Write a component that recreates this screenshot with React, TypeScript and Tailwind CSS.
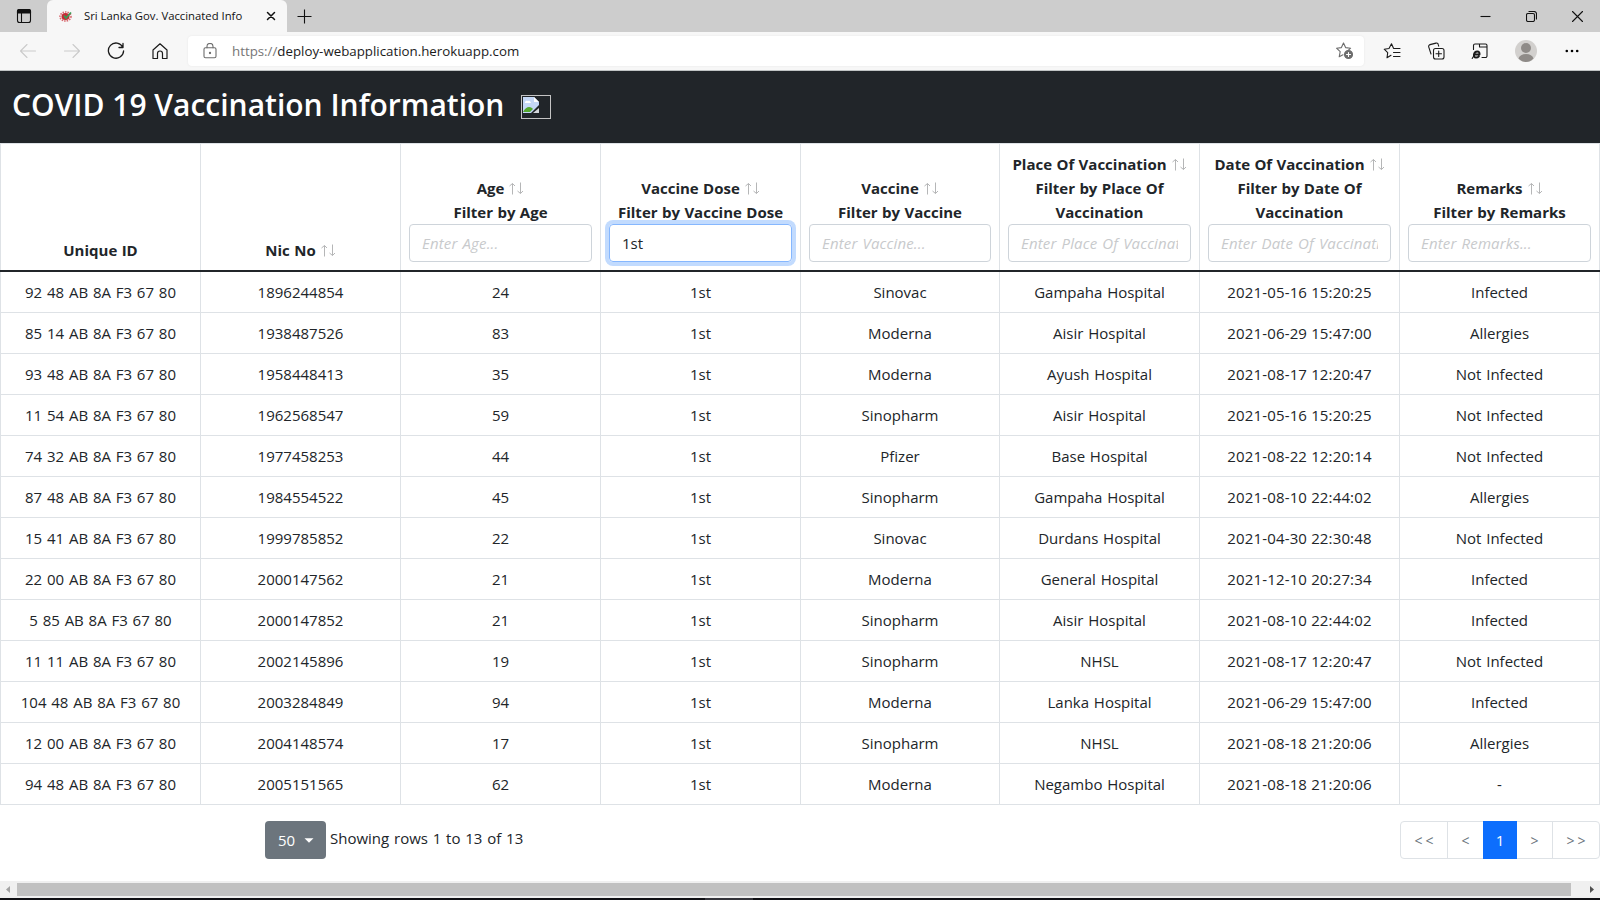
import React from "react";

const rows = `92 48 AB 8A F3 67 80|1896244854|24|1st|Sinovac|Gampaha Hospital|2021-05-16 15:20:25|Infected
85 14 AB 8A F3 67 80|1938487526|83|1st|Moderna|Aisir Hospital|2021-06-29 15:47:00|Allergies
93 48 AB 8A F3 67 80|1958448413|35|1st|Moderna|Ayush Hospital|2021-08-17 12:20:47|Not Infected
11 54 AB 8A F3 67 80|1962568547|59|1st|Sinopharm|Aisir Hospital|2021-05-16 15:20:25|Not Infected
74 32 AB 8A F3 67 80|1977458253|44|1st|Pfizer|Base Hospital|2021-08-22 12:20:14|Not Infected
87 48 AB 8A F3 67 80|1984554522|45|1st|Sinopharm|Gampaha Hospital|2021-08-10 22:44:02|Allergies
15 41 AB 8A F3 67 80|1999785852|22|1st|Sinovac|Durdans Hospital|2021-04-30 22:30:48|Not Infected
22 00 AB 8A F3 67 80|2000147562|21|1st|Moderna|General Hospital|2021-12-10 20:27:34|Infected
5 85 AB 8A F3 67 80|2000147852|21|1st|Sinopharm|Aisir Hospital|2021-08-10 22:44:02|Infected
11 11 AB 8A F3 67 80|2002145896|19|1st|Sinopharm|NHSL|2021-08-17 12:20:47|Not Infected
104 48 AB 8A F3 67 80|2003284849|94|1st|Moderna|Lanka Hospital|2021-06-29 15:47:00|Infected
12 00 AB 8A F3 67 80|2004148574|17|1st|Sinopharm|NHSL|2021-08-18 21:20:06|Allergies
94 48 AB 8A F3 67 80|2005151565|62|1st|Moderna|Negambo Hospital|2021-08-18 21:20:06|-`
  .split("\n")
  .map((line) => line.split("|"));

type Column = { title: string; sortable?: boolean; filter?: string[]; value?: string };

const columns: Column[] = [
  { title: "Unique ID" },
  { title: "Nic No", sortable: true },
  { title: "Age", sortable: true, filter: ["Filter by Age"] },
  { title: "Vaccine Dose", sortable: true, filter: ["Filter by Vaccine Dose"], value: "1st" },
  { title: "Vaccine", sortable: true, filter: ["Filter by Vaccine"] },
  { title: "Place Of Vaccination", sortable: true, filter: ["Filter by Place Of", "Vaccination"] },
  { title: "Date Of Vaccination", sortable: true, filter: ["Filter by Date Of", "Vaccination"] },
  { title: "Remarks", sortable: true, filter: ["Filter by Remarks"] },
];

const gridColumns = "grid-cols-[repeat(4,200px)_199px_200px_200px_201px]";

function Icon({ size = 18, className = "", children }: { size?: number; className?: string; children: React.ReactNode }) {
  return (
    <svg width={size} height={size} viewBox={`0 0 ${size} ${size}`} fill="none" stroke="currentColor" strokeWidth="1.1" strokeLinecap="round" strokeLinejoin="round" className={`shrink-0 ${className}`}>
      {children}
    </svg>
  );
}

function SortArrows() {
  return (
    <svg width="16" height="13" viewBox="0 0 16 13" fill="none" stroke="#b5b6b7" strokeWidth="1" className="ml-1 shrink-0">
      <path d="M4.500 12.500V1.500M1.500 4L4.500 1.500L7 4M12.500 .5V11.500M9.500 9L12.500 11.500L15 9" />
    </svg>
  );
}

function TabStrip() {
  return (
    <div className="flex h-8 shrink-0 bg-[#cdcdcd] text-[#111]">
      <div className="flex w-[47px] items-center pl-4">
        <Icon size={16}>
          <rect x="1.5" y="1.5" width="13" height="13" rx="2" />
          <path d="M1.5 4V3a1.5 1.5 0 0 1 1.5-1.500h10A1.500 1.500 0 0 1 14.500 3v2h-13z" fill="currentColor" />
          <path d="M5.500 5v9" />
        </Icon>
      </div>
      <div className="flex w-60 items-center rounded-t-md bg-[#f7f7f7] pl-3">
        <svg width="14" height="12" viewBox="0 0 14 12" className="shrink-0">
          <ellipse cx="6.500" cy="6.500" rx="5.500" ry="4.500" fill="none" stroke="#d86a70" strokeWidth="1.600" strokeDasharray="1.500 1" />
          <ellipse cx="6.500" cy="6.500" rx="4" ry="3.500" fill="#c62b35" />
          <path d="M5 5.500l2 2.500L12 2.500" fill="none" stroke="#3c9a55" strokeWidth="1.800" />
        </svg>
        <span className="ml-[11px] w-[182px] text-[11.300px] whitespace-nowrap">Sri Lanka Gov. Vaccinated Info</span>
        <Icon size={10}>
          <path d="M1.500 1.500l7 7M8.500 1.500l-7 7" strokeWidth="1.500" />
        </Icon>
      </div>
      <div className="flex flex-1 items-center pl-[10px]">
        <Icon size={15}>
          <path d="M7.500 .5v14M.5 7.500h14" strokeLinecap="butt" />
        </Icon>
      </div>
      <div className="flex w-[120px] items-center gap-[35px]">
        <Icon size={11}><path d="M.5 5.500h10" strokeLinecap="butt" /></Icon>
        <Icon size={11}>
          <rect x=".5" y="2.500" width="8" height="8" rx="1.500" />
          <path d="M3 .5h5a2.500 2.500 0 0 1 2.500 2.500v5" />
        </Icon>
        <Icon size={11}><path d="M.5 .5l10 10M10.500 .5l-10 10" /></Icon>
      </div>
    </div>
  );
}

function Toolbar() {
  return (
    <div className="flex h-[39px] shrink-0 items-center border-b border-[#c0c4c4] bg-[#f7f7f7] text-[#1b1b1b]">
      <div className="flex w-[188px] items-center gap-[26px] pl-[19px]">
        <Icon className="text-[#cbcbcb]"><path d="M16.500 9H1.500M8 2.500L1.500 9L8 15.500" /></Icon>
        <Icon className="text-[#cbcbcb]"><path d="M1.500 9h15M10 2.500L16.500 9L10 15.500" /></Icon>
        <Icon><path d="M15.800 5.200A7.600 7.600 0 1 0 16.600 9M16 1.500V5.500H12" strokeWidth="1.300" /></Icon>
        <Icon><path d="M2 8L9 1.800L16 8V16.500H11.500V11.500a2.500 2.500 0 0 0-5 0V16.500H2Z" strokeWidth="1.200" /></Icon>
      </div>
      <div className="flex h-[30px] w-[1176px] items-center rounded bg-white pr-[9px] pl-[14px] shadow-[0_0_2px_#e4e4e4]">
        <Icon size={16} className="text-[#6d6d6d]">
          <rect x="2" y="4.800" width="12" height="10" rx="1.500" />
          <path d="M5 4.800V3.200a3 2.800 0 0 1 6 0v1.600" />
          <circle cx="8" cy="10" r=".6" fill="currentColor" />
        </Icon>
        <span className="ml-[14px] flex-1 text-[13.300px]"><span className="text-[#767676]">https://</span>deploy-webapplication.herokuapp.com</span>
        <Icon size={20} className="text-[#6d6d6d]">
          <path d="M8.500 2l2.100 4.600 5 .6-3.700 3.400M8.500 2L6.400 6.600L1.500 7.200L5.200 10.600L4.200 15.800L8 13.800" />
          <circle cx="13.500" cy="13.500" r="4" fill="currentColor" />
          <path d="M11.500 13.500h4M13.500 11.500v4" stroke="white" />
        </Icon>
      </div>
      <div className="flex flex-1 items-center pl-[19px]">
        <Icon><path d="M10.800 6.500H17M10.500 6.300L8.500 1.800L6 6.500L1.200 7.200L4.700 10.700L4 15.800L8 13.300M10.500 10.500h6.500M10.500 14.500h6.500" /></Icon>
        <Icon className="ml-[26px]">
          <rect x="6.500" y="6.500" width="10.500" height="10.500" rx="2" />
          <path d="M11.700 9v5.500M9 11.700h5.500M4 12L1.700 4.800a1.800 1.800 0 0 1 1.300-2.200l6-1.500a1.800 1.800 0 0 1 2.200 1.300l.5 1.800" />
        </Icon>
        <Icon className="ml-[26px]">
          <path d="M2.500 7.500V3.500a1.500 1.500 0 0 1 1.500-1.500h10.500A1.500 1.500 0 0 1 16 3.500v10.500a1.500 1.500 0 0 1-1.500 1.500H11M8.500 2V5H16" />
          <path d="M3 12.500h5.500q.3-3-2.200-3Q3.500 9.500 3 12.500q-.4 3 2 3q1.800 0 2.800-1.200" strokeWidth="2" />
          <path d="M1.200 16.500L3 13.500" />
        </Icon>
        <svg width="22" height="22" viewBox="0 0 22 22" className="ml-[26px] shrink-0">
          <circle cx="11" cy="11" r="11" fill="#d2d0ce" />
          <circle cx="11" cy="8" r="5" fill="#8f8b88" />
          <path d="M3.500 18.500Q5 14 11 14T18.500 18.500Q15 22 11 22T3.500 18.500" fill="#8f8b88" />
        </svg>
        <svg width="14" height="4" viewBox="0 0 14 4" className="ml-7 shrink-0">
          <circle cx="1.800" cy="2" r="1.300" /><circle cx="7" cy="2" r="1.300" /><circle cx="12.200" cy="2" r="1.300" />
        </svg>
      </div>
    </div>
  );
}

function HeaderCell({ column }: { column: Column }) {
  return (
    <div className="flex h-[126px] min-w-0 flex-col justify-end border-l border-[#dee2e6] px-2 pb-2 text-center font-bold [word-spacing:0.5px] last:border-r">
      <div className="flex h-6 items-center justify-center whitespace-nowrap">
        {column.title}
        {column.sortable && <SortArrows />}
      </div>
      {column.filter?.map((line) => <div key={line} className="h-6 whitespace-nowrap">{line}</div>)}
      {column.filter && (
        <input
          className={`h-[38px] w-full rounded border px-3 text-[15px] font-normal outline-none placeholder:tracking-[0.15px] placeholder:italic placeholder:[word-spacing:1px] placeholder:text-[#c8cacc] ${column.value ? "border-[#86b7fe] shadow-[0_0_0_4px_#c2dbfe]" : "border-[#ced4da]"}`}
          placeholder={`Enter ${column.title}...`}
          defaultValue={column.value}
        />
      )}
    </div>
  );
}

function Footer() {
  return (
    <div className="flex h-[76px] items-start pt-4">
      <button className="ml-[265px] flex h-[38px] w-[61px] items-center rounded bg-[#6c757d] pl-[13px] text-white">
        50
        <svg width="10" height="5" viewBox="0 0 10 5" className="ml-[9px]"><path d="M.5 .2h9L5 4.700z" fill="white" /></svg>
      </button>
      <span className="ml-1 flex-1 pt-[5px] [word-spacing:0.9px]">Showing rows 1 to 13 of 13</span>
      <div className="flex h-[38px] w-[200px] rounded border border-[#dee2e6] text-[#6c757d]">
        <span className="flex w-[47px] items-center justify-center border-r border-[#dee2e6] pt-0.5 pl-[3px] text-[14px] tracking-[3px]">&lt;&lt;</span>
        <span className="flex w-[35px] items-center justify-center pt-0.5 text-[14px]">&lt;</span>
        <span className="-my-px flex w-[34px] items-center justify-center bg-[#0d6efd] text-white">1</span>
        <span className="flex w-9 items-center justify-center border-r border-[#dee2e6] pt-0.5 text-[14px]">&gt;</span>
        <span className="flex flex-1 items-center justify-center pt-0.5 pl-[3px] text-[14px] tracking-[3px]">&gt;&gt;</span>
      </div>
    </div>
  );
}

export default function App() {
  return (
    <div className="flex h-[900px] w-[1600px] flex-col overflow-hidden bg-white font-['Open_Sans',sans-serif] text-[15px] leading-6 text-[#212529]">
      <TabStrip />
      <Toolbar />
      <header className="flex h-[72px] shrink-0 items-center bg-[#212529] pl-3">
        <h1 className="pb-1 text-[30px] leading-9 font-semibold whitespace-nowrap text-white">COVID 19 Vaccination Information</h1>
        <div className="ml-[17px] h-6 w-[30px] border border-[#c4c4c4] p-px">
          <svg width="16" height="16" viewBox="0 0 16 16">
            <path d="M0 0h11l5 5v3L8 16H0z" fill="#c5d8f7" />
            <path d="M11 0v5h5z" fill="#fff" />
            <path d="M2 5q1-2 3-1q2-1 3 2H2z" fill="#fff" />
            <path d="M0 15q4-7 9-4l1 1-3 3z" fill="#54a82f" />
            <path d="M10 16l6-5v5z" fill="#d5d8dc" />
          </svg>
        </div>
      </header>
      <main className="shrink-0">
        <div className={`grid ${gridColumns} border-t border-b-2 border-t-[#dee2e6] border-b-[#212529]`}>
          {columns.map((column) => <HeaderCell key={column.title} column={column} />)}
        </div>
        {rows.map((row) => (
          <div key={row[1]} className={`grid h-[41px] ${gridColumns} border-b border-[#dee2e6]`}>
            {row.map((cell, i) => (
              <div key={i} className={`flex items-center justify-center border-l border-[#dee2e6] whitespace-nowrap last:border-r ${i === 6 ? "tracking-[0.15px]" : "[word-spacing:0.9px]"}`}>{cell}</div>
            ))}
          </div>
        ))}
        <Footer />
      </main>
      <div className="flex h-[17px] shrink-0 items-center bg-[#f0f0f0]">
        <svg width="17" height="17" viewBox="0 0 17 17"><path d="M10 5v7L6 8.500z" fill="#a3a3a3" /></svg>
        <div className="h-[13px] w-[1554px] bg-[#c1c1c1]" />
        <svg width="29" height="17" viewBox="0 0 29 17"><path d="M19 5v7l4-3.500z" fill="#505050" /></svg>
      </div>
      <div className="flex h-0.5 shrink-0 justify-center bg-[#101014] pr-[142px]">
        <div className="h-0.5 w-12 bg-[#34343a]" />
      </div>
    </div>
  );
}
